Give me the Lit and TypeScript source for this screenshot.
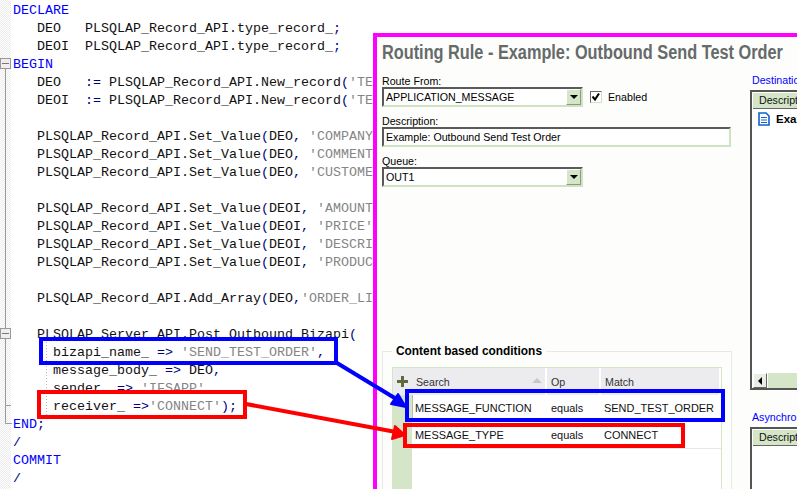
import { LitElement, html, css, svg } from "lit";
import { customElement } from "lit/decorators.js";

type Tok = [string, string?];
const LINES: Tok[][] = [
  [["DECLARE", "kw"]],
  [["   DEO   PLSQLAP_Record_API.type_record_"], [";", "op"]],
  [["   DEOI  PLSQLAP_Record_API.type_record_"], [";", "op"]],
  [["BEGIN", "kw"]],
  [["   DEO   "], [":=", "op"], [" PLSQLAP_Record_API.New_record"], ["(", "op"], ["'TEST'", "str"]],
  [["   DEOI  "], [":=", "op"], [" PLSQLAP_Record_API.New_record"], ["(", "op"], ["'TEST'", "str"]],
  [],
  [["   PLSQLAP_Record_API.Set_Value"], ["(", "op"], ["DEO"], [",", "op"], [" "], ["'COMPANY'", "str"]],
  [["   PLSQLAP_Record_API.Set_Value"], ["(", "op"], ["DEO"], [",", "op"], [" "], ["'COMMENT'", "str"]],
  [["   PLSQLAP_Record_API.Set_Value"], ["(", "op"], ["DEO"], [",", "op"], [" "], ["'CUSTOMER'", "str"]],
  [],
  [["   PLSQLAP_Record_API.Set_Value"], ["(", "op"], ["DEOI"], [",", "op"], [" "], ["'AMOUNT'", "str"]],
  [["   PLSQLAP_Record_API.Set_Value"], ["(", "op"], ["DEOI"], [",", "op"], [" "], ["'PRICE'", "str"]],
  [["   PLSQLAP_Record_API.Set_Value"], ["(", "op"], ["DEOI"], [",", "op"], [" "], ["'DESCRIPTION'", "str"]],
  [["   PLSQLAP_Record_API.Set_Value"], ["(", "op"], ["DEOI"], [",", "op"], [" "], ["'PRODUCT'", "str"]],
  [],
  [["   PLSQLAP_Record_API.Add_Array"], ["(", "op"], ["DEO"], [",", "op"], ["'ORDER_LINES'", "str"]],
  [],
  [["   PLSQLAP_Server_API.Post_Outbound_Bizapi"], ["(", "op"]],
  [["     bizapi_name_ "], ["=>", "op"], [" "], ["'SEND_TEST_ORDER'", "str"], [",", "op"]],
  [["     message_body_ "], ["=>", "op"], [" DEO"], [",", "op"]],
  [["     sender_ "], ["=>", "op"], [" "], ["'IFSAPP'", "str"], [",", "op"]],
  [["     receiver_ "], ["=>", "op"], ["'CONNECT'", "str"], [")", "op"], [";", "op"]],
  [["END", "kw"], [";", "op"]],
  [["/", "op"]],
  [["COMMIT", "kw"]],
  [["/", "op"]],
];

@customElement("app-root")
export class AppRoot extends LitElement {
  static styles = css`
    :host { display: block; position: relative; width: 797px; height: 489px; overflow: hidden; background: #fff; }
    .editor { display: flex; height: 489px; overflow: hidden; }
    .gutter { width: 11px; flex: none; background: repeating-conic-gradient(#ececec 0 25%, #fff 0 50%) 0 0 / 2px 2px; }
    .code { margin: 0 0 0 2px; padding-top: 2px; font: 13.33px/18px "Liberation Mono", monospace; color: #111; white-space: pre; }
    .line { height: 18px; }
    .kw { color: #0000ff; }
    .op { color: #000080; }
    .str { color: #858585; }

    .fold { position: absolute; left: 0; top: 0; width: 60px; height: 489px; }

    .dialog {
      position: absolute; left: 373px; top: 33px; width: 424px; height: 456px; box-sizing: border-box;
      border: solid #ff00ff; border-width: 4px 0 0 4px; background: #fdfefc; padding: 3px 0 0 5px;
      font: 10.67px "Liberation Sans", Arial, sans-serif; color: #000; overflow: hidden;
    }
    h1 { margin: 0; font: bold 20px/24px "Liberation Sans", sans-serif; color: #666a6a; white-space: nowrap; transform: scaleX(0.815); transform-origin: left center; }
    .body { display: flex; gap: 18px; margin-top: 10px; }
    .left { width: 350px; flex: none; display: flex; flex-direction: column; height: 415px; }
    .right { flex: none; width: 47px; }
    label { display: block; height: 13px; line-height: 15px; }
    .row { display: flex; align-items: center; gap: 6px; }
    .field { margin-bottom: 7px; }
    .input {
      box-sizing: border-box; height: 20px; line-height: 15px; padding: 1px 0 0 2px; width: 349px;
      border: 2px solid; border-color: #5a5a5a #cfe3c4 #cfe3c4 #5a5a5a; background: #fff; white-space: nowrap; overflow: hidden;
      display: flex; justify-content: space-between;
    }
    .select { width: 201px; padding: 0 0 0 2px; align-items: center; margin-right: 1px; }
    .btn { width: 15px; height: 16px; background: #d5e6c8; border: 1px solid; border-color: #fff #8a9a80 #8a9a80 #fff; box-sizing: border-box; display: flex; align-items: center; justify-content: center; flex: none; }
    .tri { width: 0; height: 0; border: 4px solid transparent; border-top: 4px solid #000; border-bottom: 0; }
    .check { width: 12px; height: 12px; box-sizing: border-box; border: 1px solid; border-color: #666 #cfe3c4 #cfe3c4 #666; background: #fff; display: block; flex: none; }
    .check svg { display: block; }
    fieldset { margin: auto 0 0 0; padding: 9px 9px 0; border: 1px solid #e6eae4; border-bottom: 0; height: 144px; box-sizing: border-box; width: 350px; min-width: 0; }
    legend { font: bold 11.9px/13px "Liberation Sans", sans-serif; padding: 0 4px; margin-left: 0; }
    .grid { border: solid #d5e6c8; border-width: 1px 1px 0 1px; display: grid; grid-template-columns: 19px 135px 54px 1fr; grid-template-rows: 27px 27px 27px; height: 122px; box-sizing: border-box; align-content: start; background: linear-gradient(to right, #d5e6c8 19px, #fff 19px); }
    .head { background: #ecebee; color: #333; display: flex; align-items: center; padding-left: 4px; border-right: 2px solid #fff; position: relative; }
    .head:last-of-type { border-right: 0; }
    .plus { padding: 0; border: 0; justify-content: center; }
    .sort { position: absolute; right: 3px; top: 10px; width: 0; height: 0; border: 5px solid transparent; border-bottom: 5px solid #c8c8c8; border-top: 0; }
    .cell { display: flex; align-items: center; padding-left: 3px; border-bottom: 1px solid #e6eae4; white-space: nowrap; color: #111; font-size: 10.95px; }
    .cell.op-col { padding-left: 4px; }
    .cell.first { border-left: 1px solid #b9b9b9; padding-left: 2px; }
    .marker { background: none; }
    .link { color: #0000ff; line-height: 13px; white-space: nowrap; padding-left: 2px; }
    .list { box-sizing: border-box; border: 2px solid #555; border-right: 0; background: #fff; margin-top: 3px; width: 60px; }
    .list.one { height: 300px; display: flex; flex-direction: column; }
    .list.two { height: 80px; }
    .lh { height: 15px; line-height: 14px; background: #d5e6c8; padding-left: 6px; margin: 1px 0 0 1px; border-bottom: 1px solid #666; white-space: nowrap; overflow: hidden; color: #111; }
    .item { display: flex; align-items: center; gap: 6px; font: bold 11.5px "Liberation Sans", sans-serif; padding: 2px 0 0 6px; height: 16px; overflow: hidden; }
    .item svg { flex: none; }
    .scroll { margin: auto 0 0 1px; height: 15px; display: flex; gap: 1px; background: #fff; }
    .track { flex: 1; background: #d5e6c8; }
    .sb { width: 14px; flex: none; background: #e8eee2; border: 1px solid; border-color: #fff #666 #666 #fff; box-sizing: border-box; display: flex; align-items: center; justify-content: center; }
    .tl { width: 0; height: 0; border: 4px solid transparent; border-right: 4px solid #000; border-left: 0; }
    .async { margin-top: 21px; }

    .marks { position: absolute; left: 0; top: 0; width: 797px; height: 489px; pointer-events: none; }
  `;

  render() {
    return html`
      <div class="editor">
        <div class="gutter"></div>
        <pre class="code">${LINES.map(l => html`<div class="line">${l.map(([t, c]) => html`<span class=${c ?? ""}>${t}</span>`)}</div>`)}</pre>
      </div>
      <svg class="fold" viewBox="0 0 60 489">
        <path d="M5.5 69V423.5H12" fill="none" stroke="#999"/>
        <path d="M5.5 405.5H11" stroke="#999"/>
        <rect x="0.5" y="58.5" width="10" height="10" fill="#eee" stroke="#999"/>
        <path d="M2 63.5h7" stroke="#777"/>
        <rect x="0.5" y="328.5" width="10" height="10" fill="#eee" stroke="#999"/>
        <path d="M2 333.5h7" stroke="#777"/>
        <path d="M46.5 342V416" stroke="#bbb" stroke-dasharray="1 2"/>
      </svg>
      <div class="dialog">
        <h1>Routing Rule - Example: Outbound Send Test Order</h1>
        <div class="body">
          <div class="left">
            <div class="field">
              <label>Route From:</label>
              <div class="row">
                <div class="input select"><span>APPLICATION_MESSAGE</span><span class="btn"><span class="tri"></span></span></div>
                <span class="check"><svg width="10" height="10" viewBox="0 0 10 10"><path d="M1.5 4.5l2.5 3 4-6" fill="none" stroke="#000" stroke-width="2"/></svg></span>
                <span>Enabled</span>
              </div>
            </div>
            <div class="field">
              <label>Description:</label>
              <div class="input">Example: Outbound Send Test Order</div>
            </div>
            <div class="field">
              <label>Queue:</label>
              <div class="input select"><span>OUT1</span><span class="btn"><span class="tri"></span></span></div>
            </div>
            <fieldset>
              <legend>Content based conditions</legend>
              <div class="grid">
                <div class="head plus"><svg width="11" height="11" viewBox="0 0 11 11"><path d="M5.5 0v11M0 5.5h11" stroke="#5f6b3c" stroke-width="3"/></svg></div>
                <div class="head">Search<span class="sort"></span></div>
                <div class="head">Op</div>
                <div class="head">Match</div>
                <div class="marker"></div><div class="cell first">MESSAGE_FUNCTION</div><div class="cell op-col">equals</div><div class="cell">SEND_TEST_ORDER</div>
                <div class="marker"></div><div class="cell">MESSAGE_TYPE</div><div class="cell op-col">equals</div><div class="cell">CONNECT</div>
              </div>
            </fieldset>
          </div>
          <div class="right">
            <div class="link">Destinations</div>
            <div class="list one">
              <div class="lh">Description</div>
              <div class="item">
                <svg width="12" height="14" viewBox="0 0 12 14"><path d="M1 1h7l3 3v9H1z" fill="#fff" stroke="#0f62cf" stroke-width="1.6"/><path d="M3 5.5h6M3 8h6M3 10.5h6" stroke="#0f62cf"/></svg>
                <span>Example</span>
              </div>
              <div class="scroll"><span class="sb"><span class="tl"></span></span><span class="track"></span></div>
            </div>
            <div class="link async">Asynchronous</div>
            <div class="list two"><div class="lh">Description</div></div>
          </div>
        </div>
      </div>
      <svg class="marks" viewBox="0 0 797 489">
        ${svg`
        <g fill="none" stroke-width="4">
          <rect x="41" y="339" width="295" height="24" stroke="#0000ff"/>
          <rect x="39" y="392" width="206" height="25" stroke="#ff0000"/>
          <rect x="407" y="391" width="316" height="29" stroke="#0000ff"/>
          <rect x="405" y="425" width="278" height="21" stroke="#ff0000"/>
        </g>
        <path d="M337 363L398 400" stroke="#0000ff" stroke-width="4"/>
        <path d="M406 407L398 394L391 404Z" fill="#0000ff" stroke="#0000ff" stroke-width="2" stroke-linejoin="round"/>
        <path d="M246 404L396 432" stroke="#ff0000" stroke-width="4"/>
        <path d="M405 435L395 426L392 439Z" fill="#ff0000" stroke="#ff0000" stroke-width="2" stroke-linejoin="round"/>`}
      </svg>
    `;
  }
}
